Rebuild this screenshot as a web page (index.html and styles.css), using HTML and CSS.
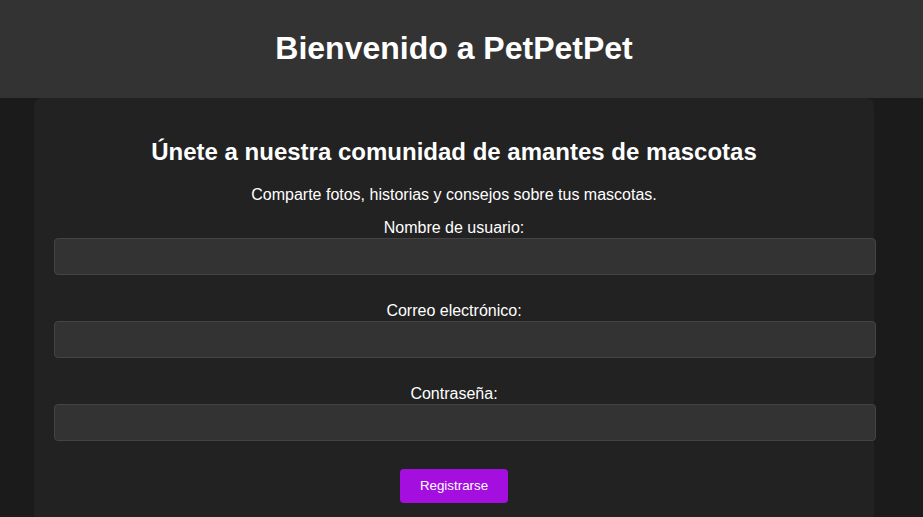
FILE: index.html
```html
<!DOCTYPE html>
<html lang="es">
<head>
<meta charset="utf-8">
<title>PetPetPet</title>
<link rel="stylesheet" href="styles.css">
</head>
<body>
<header class="site-header">
  <h1 class="site-title">Bienvenido a PetPetPet</h1>
</header>
<div class="page">
  <main class="card">
    <h2 class="card-title">Únete a nuestra comunidad de amantes de mascotas</h2>
    <p class="card-lead">Comparte fotos, historias y consejos sobre tus mascotas.</p>
    <form class="signup">
      <label class="field-label" for="u">Nombre de usuario:</label>
      <input class="field-input" id="u" type="text">
      <label class="field-label" for="e">Correo electrónico:</label>
      <input class="field-input" id="e" type="email">
      <label class="field-label" for="p">Contraseña:</label>
      <input class="field-input" id="p" type="password">
      <button class="submit-btn" type="button">Registrarse</button>
    </form>
  </main>
</div>
</body>
</html>
```

FILE: styles.css
```css
html {
  background: #1b1b1b;
}
body {
  margin: 0;
  font-family: "Liberation Sans", Arial, sans-serif;
  color: #fff;
  background: #1b1b1b;
}
.site-header {
  background: #333;
  padding: 30px 15px 31px 0;
  text-align: center;
}
.site-title {
  margin: 0;
  font-size: 32px;
  line-height: 37px;
  font-weight: bold;
}
.page {
  padding-right: 15px;
}
.card {
  max-width: 800px;
  margin: 0 auto;
  background: #222;
  padding: 20px;
  border-radius: 8px;
  text-align: center;
}
.card-title {
  font-size: 24px;
  line-height: 28px;
  margin: 20px 0;
}
.card-lead {
  font-size: 16px;
  line-height: 18px;
  margin: 0 0 15px;
}
.signup {
  display: flex;
  flex-direction: column;
  align-items: center;
}
.field-label {
  font-size: 16px;
  line-height: 18px;
  margin-bottom: 1px;
}
.field-input {
  align-self: stretch;
  width: auto;
  margin-right: -22px;
  padding: 10px;
  font-size: 13.33px;
  line-height: 15px;
  height: 15px;
  background: #333;
  border: 1px solid #444;
  border-radius: 4px;
  color: #fff;
  margin-bottom: 27px;
}
.submit-btn {
  margin-top: 1px;
  background: #a40fe0;
  color: #fff;
  border: none;
  border-radius: 4px;
  padding: 10px 20px;
  font-family: "Liberation Sans", Arial, sans-serif;
  font-size: 13.33px;
  line-height: 14px;
  height: 34px;
}
```
